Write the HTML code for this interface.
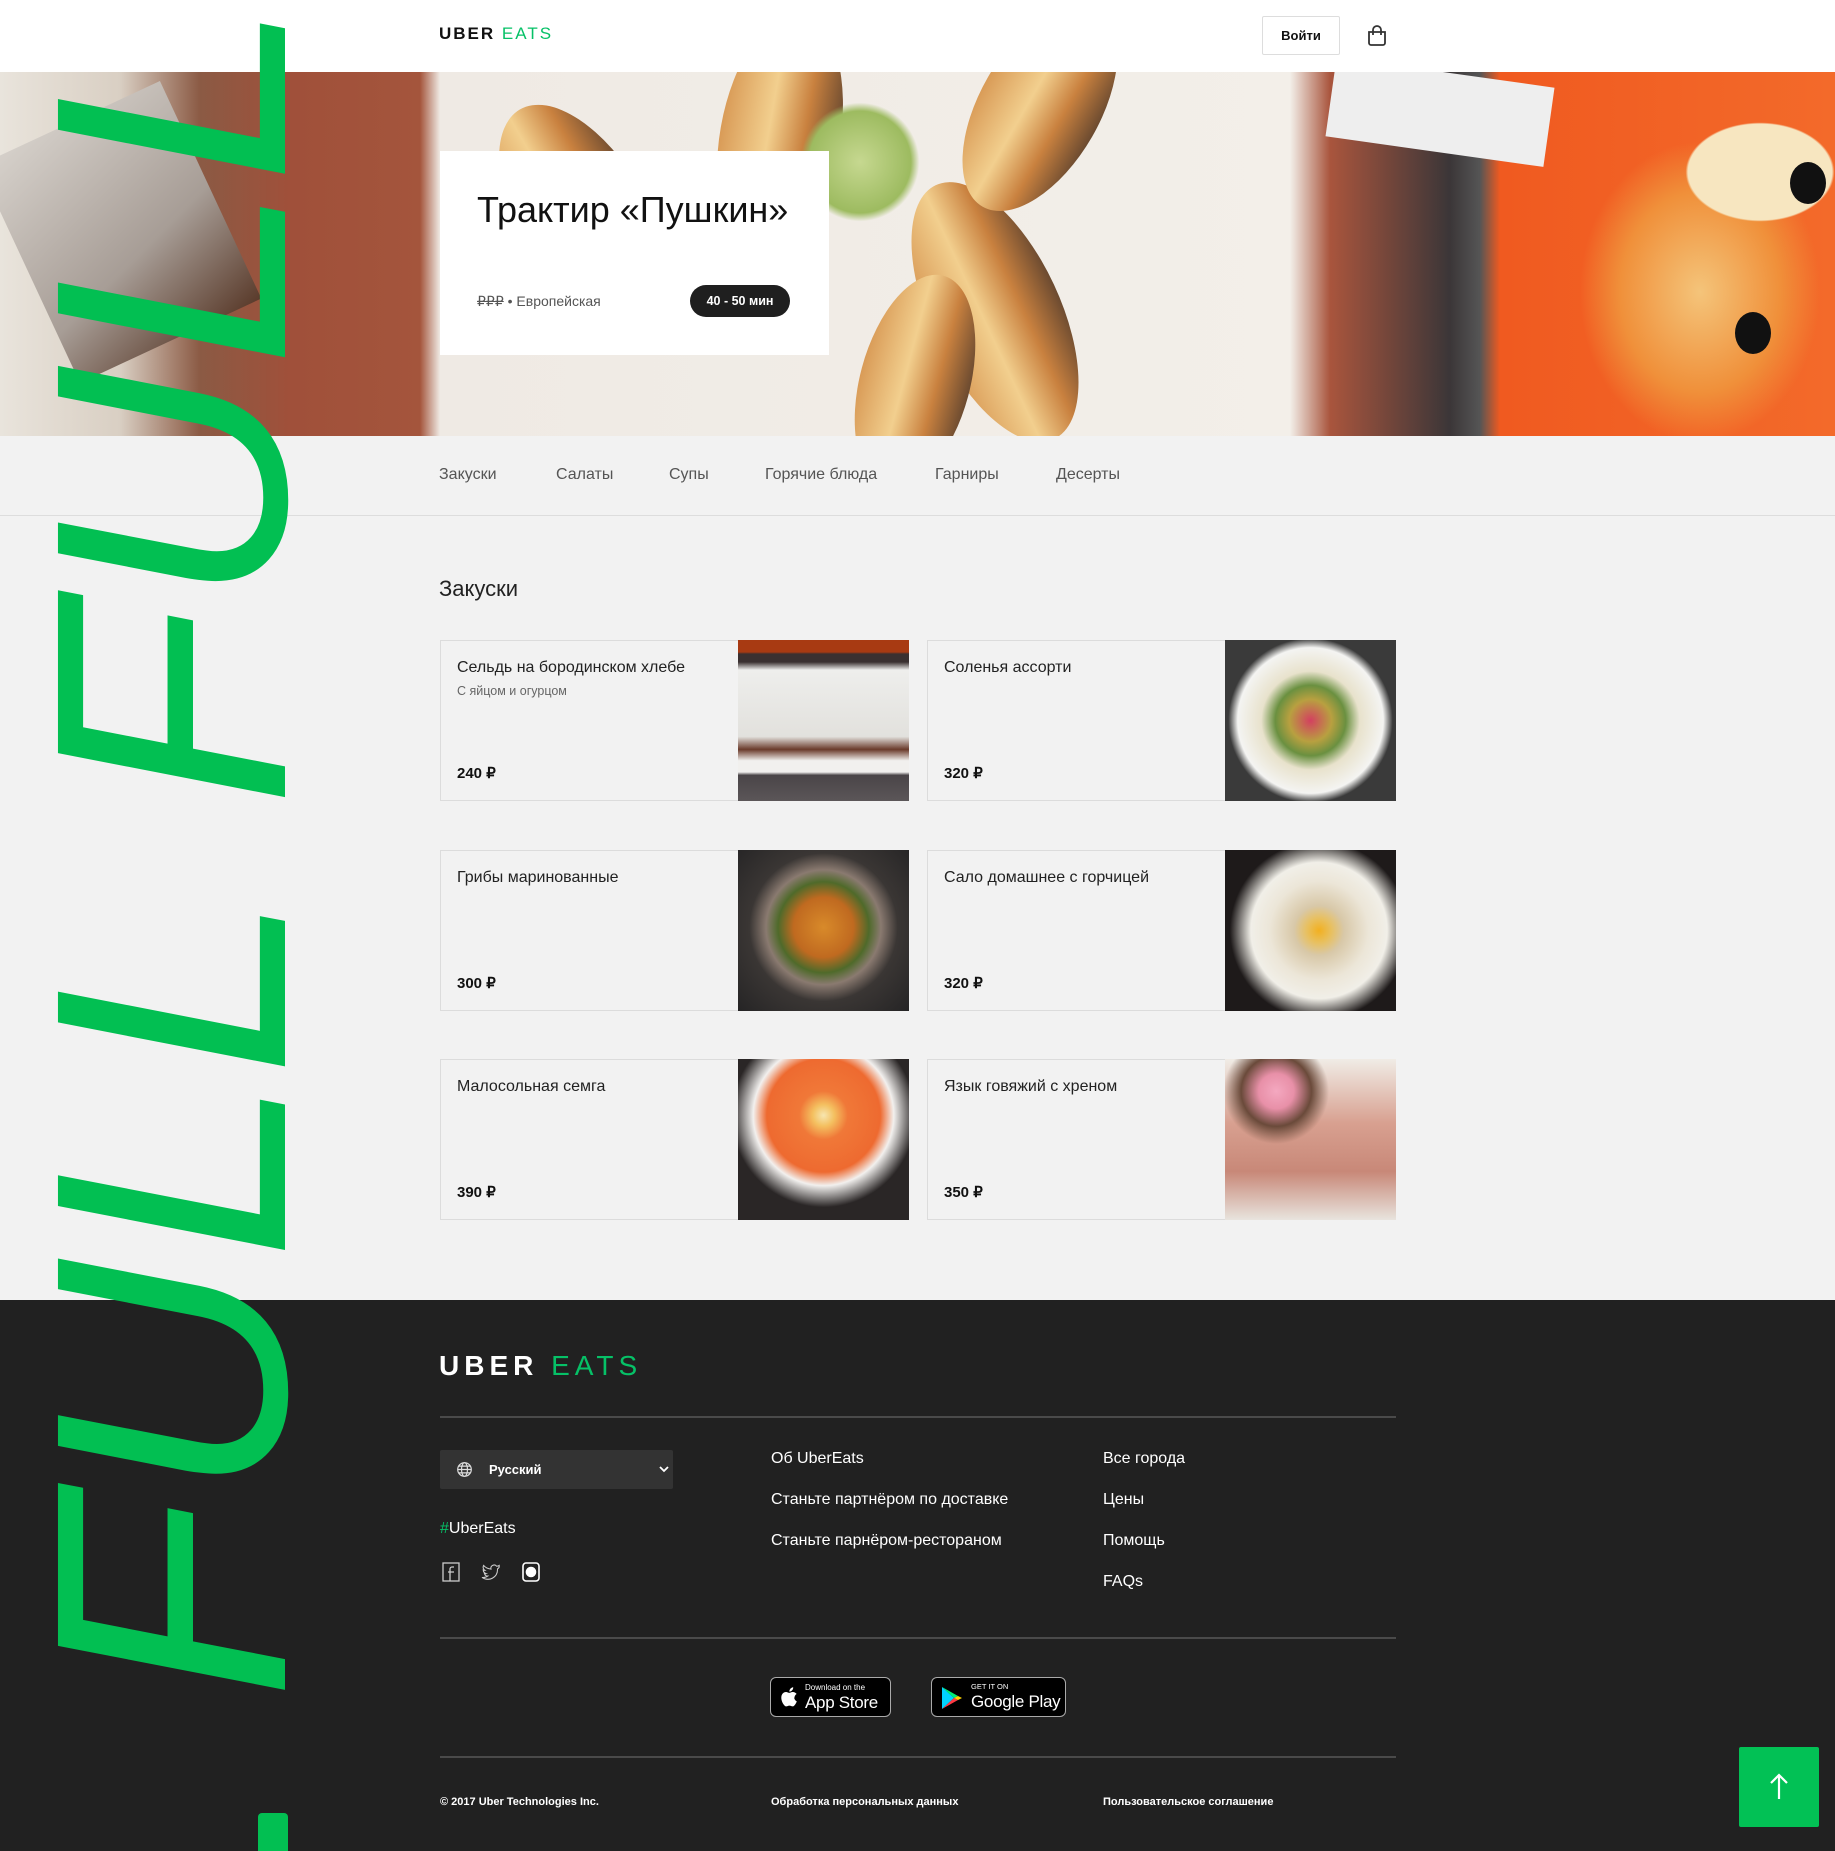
<!DOCTYPE html>
<html><head><meta charset="utf-8">
<style>
*{box-sizing:border-box;margin:0;padding:0}
html,body{width:1835px;height:1851px;overflow:hidden}
body{background:#f2f2f2;font-family:"Liberation Sans","Noto Sans CJK SC",sans-serif;color:#222}
#wrap{position:relative;width:1835px;height:1851px;overflow:hidden;background:#f2f2f2}
.abs{position:absolute}
.header{left:0;top:0;width:1835px;height:72px;background:#fff}
.logo{font-weight:400;letter-spacing:2px;white-space:nowrap}
.logo b{color:#111;font-weight:700}
.logo span{color:#06c167}
.hero{left:0;top:72px;width:1835px;height:364px;overflow:hidden;
background:
radial-gradient(ellipse 120px 80px at 1760px 100px,#f7e6c0 0,#f7e6c0 60%,transparent 62%),
radial-gradient(ellipse 160px 200px at 1700px 220px,#f4c47a 0,#f0903a 50%,transparent 75%),
linear-gradient(90deg,#e9e4dc 0,#d9cfc3 120px,#8b5a44 200px,#a0503a 290px,#a4553c 420px,#efeae4 440px,#f3efe9 1290px,#a9553d 1330px,#3b3638 1450px,#555 1480px,#f05a20 1500px,#f36a2a 1835px)}
.mus{position:absolute;border-radius:50%;background:linear-gradient(90deg,#d99b57,#f2cf8e 40%,#c9813f 70%,#6b4a30)}
.hcard{left:440px;top:151px;width:389px;height:204px;background:#fff}
.tabs{left:0;top:436px;width:1835px;height:80px;border-bottom:1px solid #ddd;background:#f2f2f2}
.tab{position:absolute;top:466px;font-size:16px;color:#555}
.item{position:absolute;width:469px;height:161px;background:#f2f2f2;border:1px solid #dcdcdc}
.item .t{position:absolute;left:16px;top:18px;font-size:16px;color:#222}
.item .s{position:absolute;left:16px;top:43px;font-size:12.5px;color:#666}
.item .p{position:absolute;left:16px;top:123px;font-size:15px;font-weight:700;color:#111}
.item .im{position:absolute;right:-1px;top:-1px;width:171px;height:161px}
.footer{left:0;top:1300px;width:1835px;height:551px;background:#212121}
.hr{position:absolute;left:440px;width:956px;height:2px;background:#4a4a4a}
.fl{position:absolute;font-size:16px;color:#fff}
.sm{position:absolute;top:1796px;font-size:11px;font-weight:700;color:#fff}
.full{position:absolute;left:0;top:0;transform-origin:0 0;transform:translate(6px,1700px) rotate(-90deg);font-size:330px;line-height:330px;font-style:italic;color:#02bf52;white-space:nowrap;font-family:"Liberation Sans",sans-serif;z-index:10}
</style></head><body><div id="wrap">

<div class="abs header"></div>
<div class="abs logo" style="left:439px;top:24px;font-size:17px;"><b>UBER</b> <span>EATS</span></div>
<div class="abs" style="left:1262px;top:16px;width:78px;height:39px;border:1px solid #ddd;border-radius:2px;font-size:13px;font-weight:700;color:#111;text-align:center;line-height:37px">Войти</div>
<svg class="abs" style="left:1365px;top:24px" width="24" height="24" viewBox="0 0 24 24" fill="none" stroke="#333" stroke-width="1.8"><path d="M4 8h16v11a2 2 0 0 1-2 2H6a2 2 0 0 1-2-2z"/><path d="M8 11V6a4 4 0 0 1 8 0v5"/></svg>

<div class="abs hero">
 <div class="mus" style="left:520px;top:20px;width:130px;height:260px;transform:rotate(-30deg)"></div>
 <div class="mus" style="left:720px;top:-60px;width:120px;height:250px;transform:rotate(10deg)"></div>
 <div class="mus" style="left:930px;top:100px;width:130px;height:280px;transform:rotate(-25deg)"></div>
 <div class="mus" style="left:860px;top:200px;width:110px;height:220px;transform:rotate(15deg)"></div>
 <div class="mus" style="left:980px;top:-80px;width:120px;height:230px;transform:rotate(30deg)"></div>
 <div class="abs" style="left:800px;top:30px;width:120px;height:120px;border-radius:50%;background:radial-gradient(#c6d890,#9dbb60 60%,transparent 70%)"></div>
 <div class="abs" style="left:1330px;top:0;width:220px;height:80px;background:#eee;transform:rotate(8deg)"></div>
 <div class="abs" style="left:20px;top:40px;width:200px;height:240px;background:linear-gradient(160deg,#d7d2cc,#a79d96 60%,#5a3b2b);transform:rotate(-25deg)"></div>
 <div class="abs" style="left:1790px;top:90px;width:36px;height:42px;border-radius:50%;background:#111"></div>
 <div class="abs" style="left:1735px;top:240px;width:36px;height:42px;border-radius:50%;background:#111"></div>
</div>

<div class="abs hcard">
 <div class="abs" style="left:37px;top:38px;font-size:36px;color:#111;white-space:nowrap">Трактир «Пушкин»</div>
 <div class="abs" style="left:37px;top:142px;font-size:14px;color:#555;white-space:nowrap"><s>₽₽₽</s> • Европейская</div>
 <div class="abs" style="left:250px;top:134px;width:100px;height:32px;border-radius:16px;background:#1f1f1f;color:#fff;font-size:12.5px;font-weight:700;text-align:center;line-height:32px">40 - 50 мин</div>
</div>

<div class="abs tabs"></div>
<div class="tab" style="left:439px">Закуски</div>
<div class="tab" style="left:556px">Салаты</div>
<div class="tab" style="left:669px">Супы</div>
<div class="tab" style="left:765px">Горячие блюда</div>
<div class="tab" style="left:935px">Гарниры</div>
<div class="tab" style="left:1056px">Десерты</div>

<div class="abs" style="left:439px;top:576px;font-size:22px;color:#222">Закуски</div>

<div class="item" style="left:440px;top:640px"><div class="t">Сельдь на бородинском хлебе</div><div class="s">С яйцом и огурцом</div><div class="p">240 ₽</div>
<div class="im" style="background:linear-gradient(180deg,#a83a12 0,#a83a12 12px,#3a3030 14px,#3a3030 22px,#eeeeec 30px,#e2e1dd 60%,#6a3a2a 68%,#f1f0ee 75%,#f1f0ee 82%,#4a4548 84%,#5b5658 100%)"></div></div>
<div class="item" style="left:927px;top:640px"><div class="t">Соленья ассорти</div><div class="p">320 ₽</div>
<div class="im" style="background:radial-gradient(circle at 50% 50%,#d34060 0,#b8a040 18%,#6a9040 30%,#e8e2cc 42%,#f4f4f2 62%,#3a3a3a 70%)"></div></div>

<div class="item" style="left:440px;top:850px"><div class="t">Грибы маринованные</div><div class="p">300 ₽</div>
<div class="im" style="background:radial-gradient(circle at 50% 48%,#d88a2a 0,#c06a20 25%,#4f6a2a 38%,#8a7a70 48%,#3a3634 62%,#252425 100%)"></div></div>
<div class="item" style="left:927px;top:850px"><div class="t">Сало домашнее с горчицей</div><div class="p">320 ₽</div>
<div class="im" style="background:radial-gradient(circle at 55% 50%,#f2b020 0,#e8c060 10%,#d8c8a8 20%,#ece6d8 40%,#f1efe8 55%,#1e1a1a 72%)"></div></div>

<div class="item" style="left:440px;top:1059px"><div class="t">Малосольная семга</div><div class="p">390 ₽</div>
<div class="im" style="background:radial-gradient(circle at 50% 35%,#f6e6b0 0,#f4c060 8%,#f07838 18%,#ee6a30 42%,#f2f0ee 52%,#2a2626 68%)"></div></div>
<div class="item" style="left:927px;top:1059px"><div class="t">Язык говяжий с хреном</div><div class="p">350 ₽</div>
<div class="im" style="background:radial-gradient(circle at 30% 20%,#f4a8c0 0,#e890a8 10%,#6a4a3a 20%,transparent 30%),linear-gradient(180deg,#f0ece6 0,#d8a090 40%,#c88878 70%,#e8e4de 100%)"></div></div>

<div class="abs footer"></div>
<div class="abs" style="left:439px;top:1350px;font-size:28px;letter-spacing:5px;white-space:nowrap"><b style="color:#fff">UBER</b> <span style="color:#06c167">EATS</span></div>
<div class="hr" style="top:1416px"></div>
<div class="abs" style="left:440px;top:1450px;width:233px;height:39px;background:#333;border-radius:2px"></div>
<svg class="abs" style="left:456px;top:1461px" width="17" height="17" viewBox="0 0 20 20" fill="none" stroke="#ddd" stroke-width="1.4"><circle cx="10" cy="10" r="8"/><ellipse cx="10" cy="10" rx="3.5" ry="8"/><path d="M2 10h16M3.5 6h13M3.5 14h13"/></svg>
<div class="abs" style="left:489px;top:1462px;font-size:13px;font-weight:700;color:#fff">Русский</div>
<svg class="abs" style="left:659px;top:1464px" width="10" height="10" viewBox="0 0 10 10" fill="none" stroke="#fff" stroke-width="1.8"><path d="M1 3l4 4 4-4"/></svg>
<div class="fl" style="left:440px;top:1520px"><span style="color:#06c167">#</span>UberEats</div>
<svg class="abs" style="left:442px;top:1562px" width="18" height="20" viewBox="0 0 18 20" fill="none" stroke="#ccc" stroke-width="1.3"><rect x="1" y="1" width="16" height="18"/><path d="M12 5h-2a2 2 0 0 0-2 2v12M6 10h6"/></svg>
<svg class="abs" style="left:481px;top:1563px" width="20" height="18" viewBox="0 0 24 22" fill="none" stroke="#ccc" stroke-width="1.3"><path d="M22 3c-1 .6-2 .9-3 1a4 4 0 0 0-7 3.5C8 7 5 5.5 3 3c-1.5 2.5 0 5 1.5 6-.8 0-1.5-.2-2-.5 0 2 1.5 4 3.5 4.5-.7.2-1.4.2-2 0 .6 2 2.4 3 4 3-2 1.5-4.5 2-7 1.7 9 5.5 19 0 19-10v-.5c1-.6 1.6-1.4 2-2.2z"/></svg>
<svg class="abs" style="left:522px;top:1562px" width="18" height="20" viewBox="0 0 18 20" fill="none" stroke="#fff" stroke-width="1.6"><rect x="1" y="1" width="16" height="18" rx="3"/><circle cx="9" cy="10" r="4.5" fill="#fff"/></svg>

<div class="fl" style="left:771px;top:1450px">Об UberEats</div>
<div class="fl" style="left:771px;top:1491px">Станьте партнёром по доставке</div>
<div class="fl" style="left:771px;top:1532px">Станьте парнёром-рестораном</div>
<div class="fl" style="left:1103px;top:1450px">Все города</div>
<div class="fl" style="left:1103px;top:1491px">Цены</div>
<div class="fl" style="left:1103px;top:1532px">Помощь</div>
<div class="fl" style="left:1103px;top:1573px">FAQs</div>

<div class="hr" style="top:1637px"></div>
<div class="abs" style="left:770px;top:1677px;width:121px;height:40px;background:#000;border:1px solid #aaa;border-radius:6px;color:#fff">
 <svg class="abs" style="left:9px;top:8px" width="18" height="22" viewBox="0 0 18 22" fill="#fff"><path d="M14.5 11.7c0-2.5 2-3.6 2.1-3.7-1.2-1.7-3-1.9-3.6-2-1.5-.2-3 .9-3.7.9-.8 0-2-.9-3.2-.9C4.400 6 2.900 7 2.100 8.400.4 11.300 1.700 15.600 3.300 18c.8 1.200 1.800 2.500 3 2.400 1.200 0 1.700-.8 3.100-.8 1.500 0 1.900.8 3.200.8 1.300 0 2.100-1.200 2.900-2.400.9-1.300 1.300-2.600 1.300-2.700 0 0-2.500-1-2.600-3.800zM12.200 4.200c.7-.8 1.100-1.900 1-3-1 0-2.100.7-2.800 1.500-.6.700-1.200 1.800-1 2.900 1 .1 2.100-.6 2.800-1.400z"/></svg>
 <div class="abs" style="left:34px;top:5px;font-size:8px;white-space:nowrap">Download on the</div>
 <div class="abs" style="left:34px;top:15px;font-size:17px;white-space:nowrap;letter-spacing:-.3px">App Store</div>
</div>
<div class="abs" style="left:931px;top:1677px;width:135px;height:40px;background:#000;border:1px solid #aaa;border-radius:6px;color:#fff">
 <svg class="abs" style="left:9px;top:8px" width="22" height="24" viewBox="0 0 22 24"><path d="M1 1l12 11L1 23z" fill="#00d3ff"/><path d="M1 1l16 9-4 2z" fill="#00f076"/><path d="M1 23l16-9-4-2z" fill="#ff3a44"/><path d="M17 10l4 2-4 2-4-2z" fill="#ffd400"/></svg>
 <div class="abs" style="left:39px;top:4px;font-size:7.5px;white-space:nowrap">GET IT ON</div>
 <div class="abs" style="left:39px;top:14px;font-size:17px;white-space:nowrap;letter-spacing:-.3px">Google Play</div>
</div>

<div class="hr" style="top:1756px"></div>
<div class="sm" style="left:440px">© 2017 Uber Technologies Inc.</div>
<div class="sm" style="left:771px">Обработка персональных данных</div>
<div class="sm" style="left:1103px">Пользовательское соглашение</div>

<div class="abs" style="left:1739px;top:1747px;width:80px;height:80px;background:#02c155;border-radius:2px"></div>
<svg class="abs" style="left:1766px;top:1773px" width="26" height="28" viewBox="0 0 26 28" fill="none" stroke="#fff" stroke-width="2.2"><path d="M13 26V3M5 10l8-8 8 8"/></svg>

<div class="full">FULL FULL FULL</div>
<div class="abs" style="left:258px;top:1813px;width:30px;height:38px;background:#02bf52;border-radius:4px 4px 0 0;z-index:10"></div>
</div></body></html>
